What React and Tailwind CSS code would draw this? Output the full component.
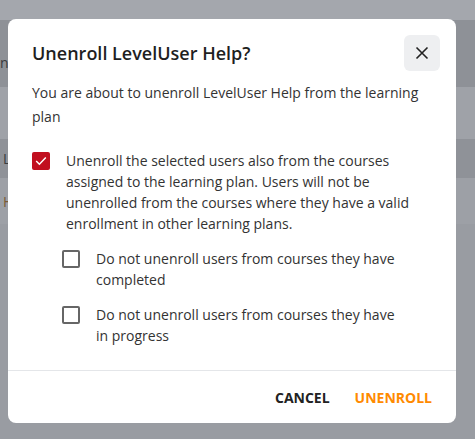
import React, { useState } from "react";

function Check({ checked, onChange }) {
  return (
    <button
      type="button"
      onClick={onChange}
      className={`mt-[2px] flex h-[18px] w-[18px] shrink-0 items-center justify-center rounded-[2px] ${
        checked ? "bg-[#c10f1f]" : "border-2 border-[#666666] bg-white"
      }`}
    >
      {checked ? (
        <svg width="12" height="10" viewBox="0 0 12 10" fill="none">
          <path d="M1.2 5L4.4 8.2L10.8 1.6" stroke="white" strokeWidth="1.5" />
        </svg>
      ) : null}
    </button>
  );
}

export default function App() {
  const [main, setMain] = useState(true);
  const [completed, setCompleted] = useState(false);
  const [progress, setProgress] = useState(false);

  return (
    <div
      className="relative h-[439px] w-[475px] overflow-hidden bg-[#999ca2]"
      style={{ fontFamily: '"Open Sans", "Liberation Sans", sans-serif' }}
    >
      {/* page behind the overlay */}
      <div className="h-[20px] bg-[#a4a7ad]" />
      <div className="flex h-[67px] items-end bg-[#8e9197] pb-[14px] text-[14px] text-[#3a3b3d]">
        <span>ne</span>
      </div>
      <div className="h-[52px] bg-[#9fa2a8]" />
      <div className="flex h-[39px] items-center bg-[#8f9298] pl-[3px] text-[14px] text-[#3a3b3d]">L</div>
      <div className="flex h-[46px] items-center bg-[#9da0a6] pl-[3px] text-[14px] text-[#7a5a34]">H</div>

      {/* dialog */}
      <div className="absolute left-2 top-[19px] w-[448px] rounded-[8px] bg-white">
        <div className="flex items-center justify-between pl-6 pr-4 pt-4">
          <h2 className="text-[18px] font-semibold text-[#1f1f1f]">Unenroll LevelUser Help?</h2>
          <button className="flex h-9 w-9 items-center justify-center rounded-[6px] bg-[#eeeff1]">
            <svg width="14" height="14" viewBox="0 0 14 14" fill="none">
              <path d="M1.5 1.5L12.5 12.5M12.5 1.5L1.5 12.5" stroke="#222" strokeWidth="1.6" />
            </svg>
          </button>
        </div>

        <div className="px-6 pb-6 text-[14px] text-[#333333]">
          <p className="mt-[10px] leading-[24px]">
            You are about to unenroll LevelUser Help from the learning plan
          </p>

          <label className="mt-[21px] flex items-start gap-4">
            <Check checked={main} onChange={() => setMain(!main)} />
            <span className="leading-[21px]">
              Unenroll the selected users also from the courses assigned to the learning plan. Users
              will not be unenrolled from the courses where they have a valid enrollment in other
              learning plans.
            </span>
          </label>

          <label className="ml-[30px] mt-[14px] flex items-start gap-4">
            <Check checked={completed} onChange={() => setCompleted(!completed)} />
            <span className="pr-[30px] leading-[21px]">
              Do not unenroll users from courses they have completed
            </span>
          </label>

          <label className="ml-[30px] mt-[14px] flex items-start gap-4">
            <Check checked={progress} onChange={() => setProgress(!progress)} />
            <span className="pr-[30px] leading-[21px]">
              Do not unenroll users from courses they have in progress
            </span>
          </label>
        </div>

        <div className="flex h-[53px] items-center justify-end gap-[25px] border-t border-[#e4e6e9] px-6 text-[14px] font-bold">
          <button className="text-[#222222]">CANCEL</button>
          <button className="text-[#ff8a00]">UNENROLL</button>
        </div>
      </div>
    </div>
  );
}
